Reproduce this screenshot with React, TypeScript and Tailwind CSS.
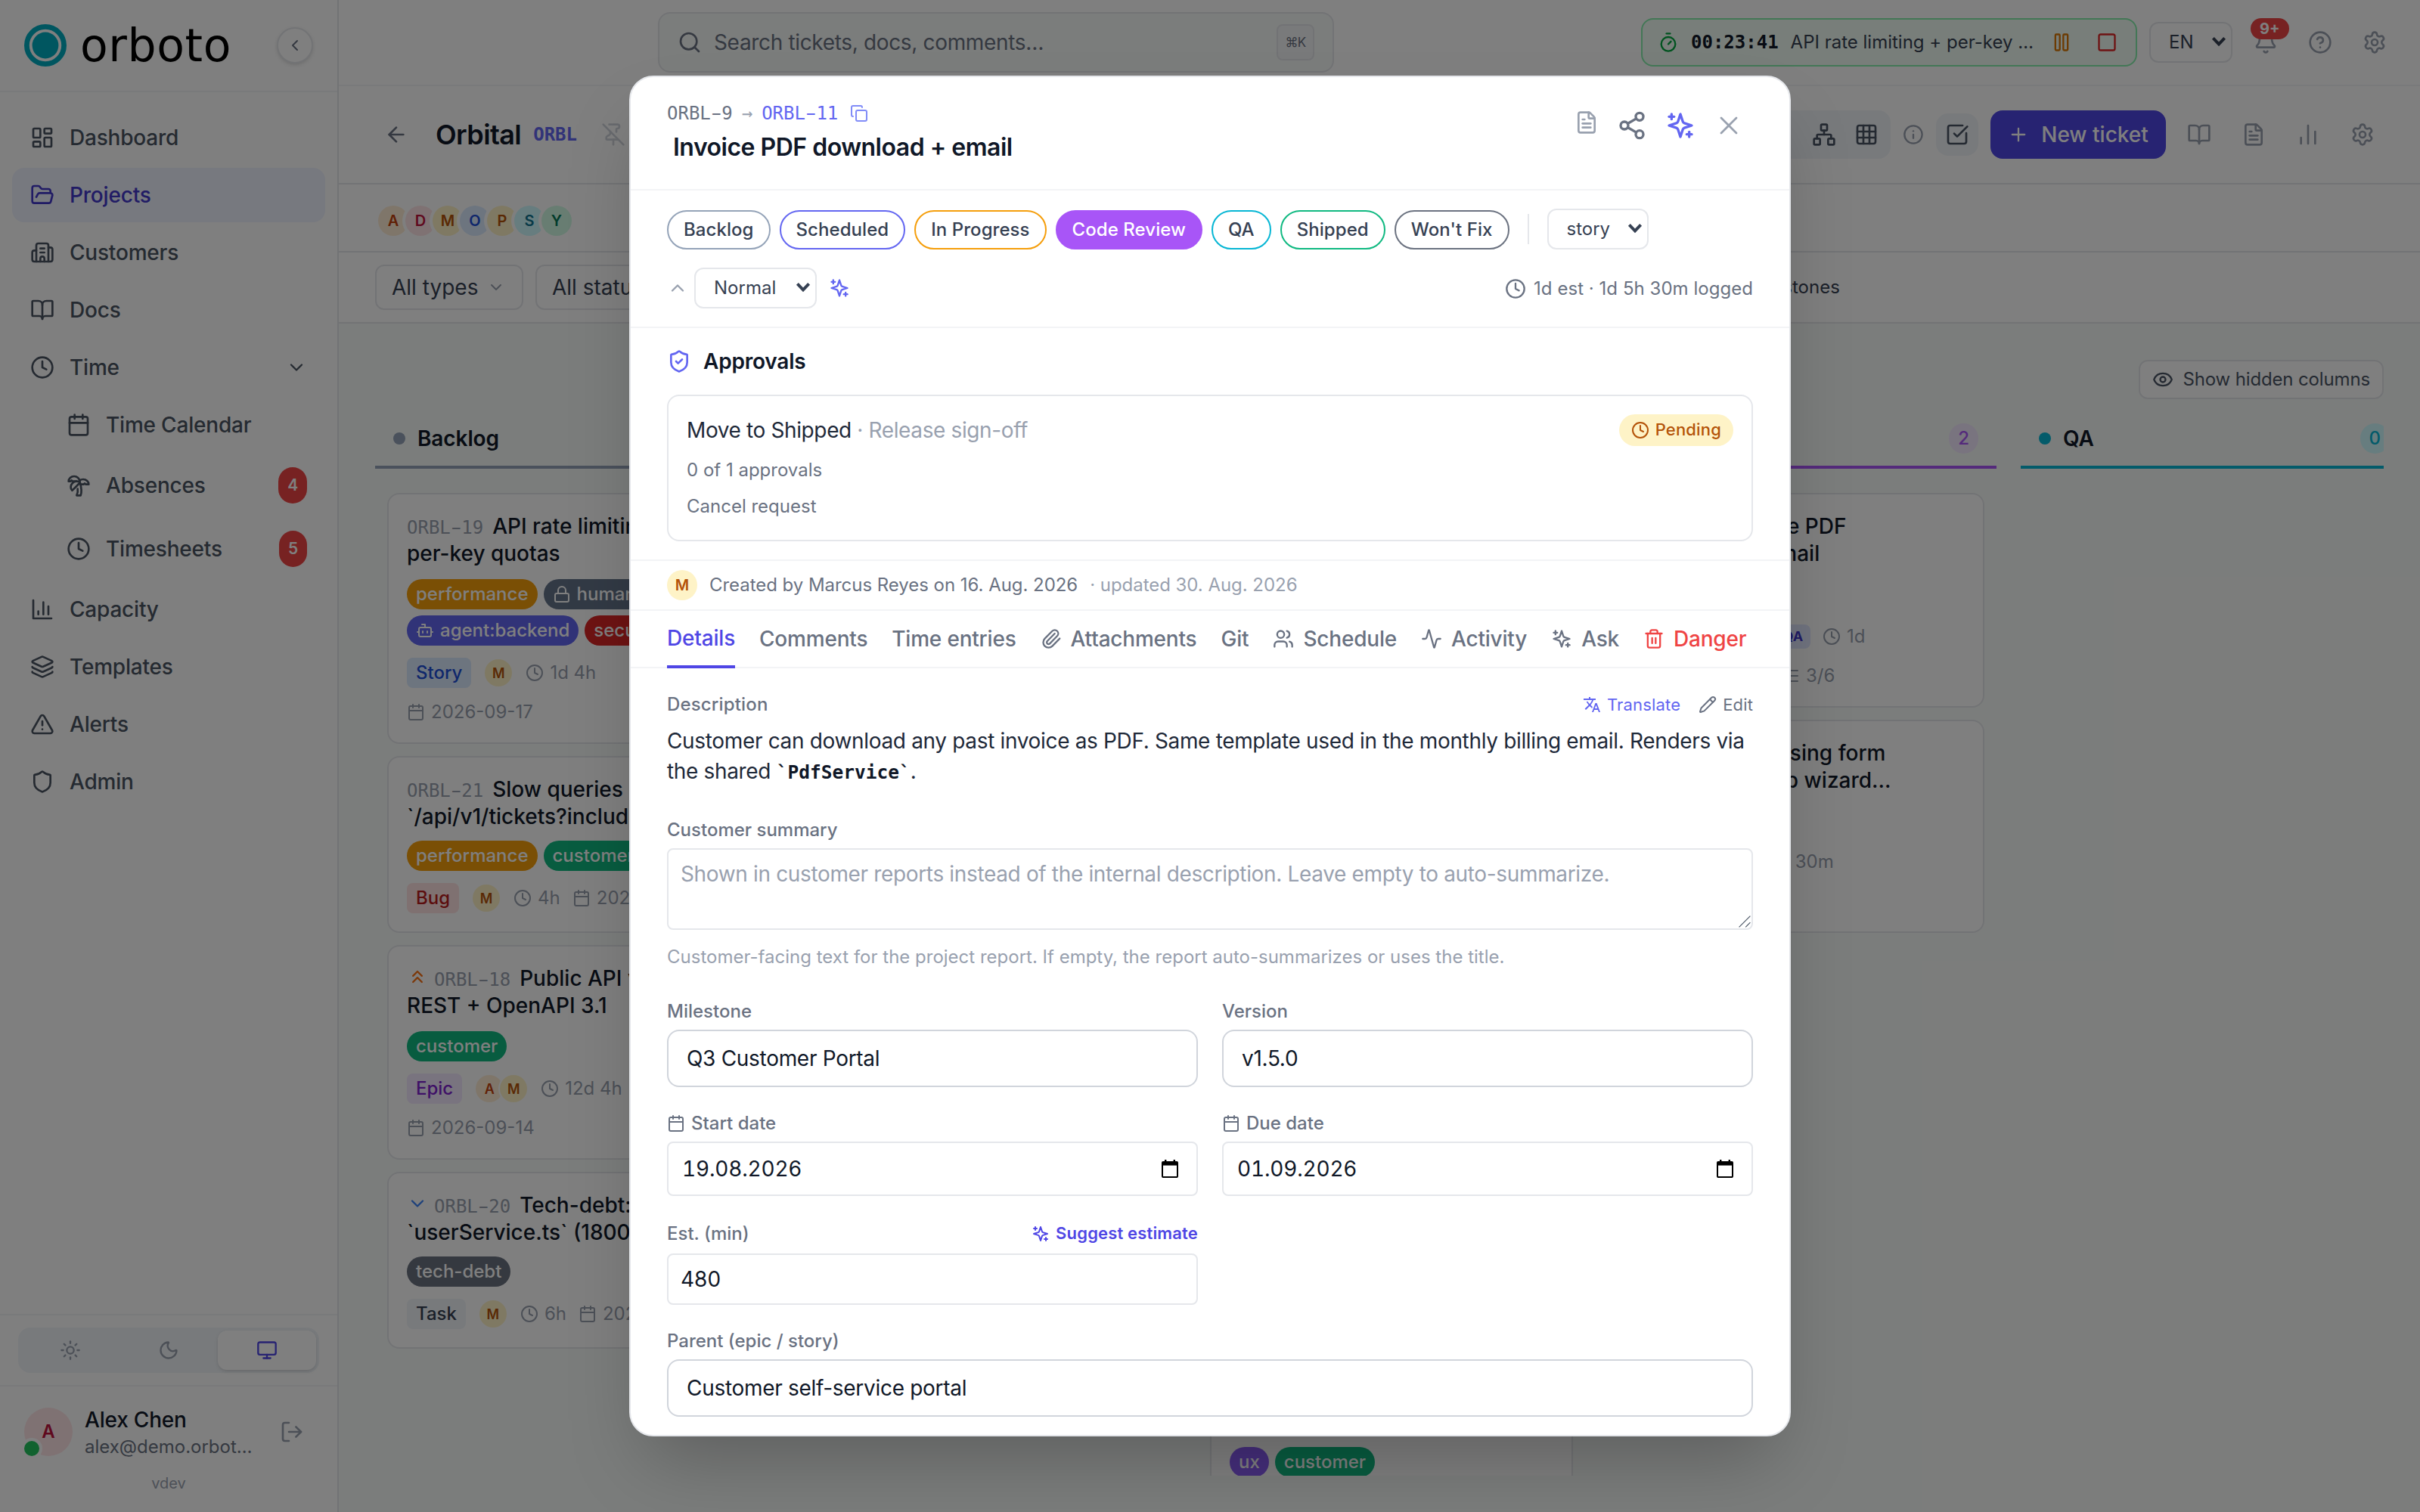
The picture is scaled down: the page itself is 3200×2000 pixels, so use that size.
import React from "react";
import {
  Activity,
  ArrowLeft,
  Bell,
  BookOpen,
  Bot,
  Building2,
  Calendar,
  ChartNoAxesColumn,
  ChevronDown,
  ChevronLeft,
  ChevronsUp,
  ChevronUp,
  CircleHelp,
  Clock,
  Copy,
  Eye,
  FileText,
  FolderOpen,
  Grid3x3,
  Info,
  Layers,
  LayoutDashboard,
  List,
  Lock,
  LogOut,
  Monitor,
  Moon,
  Network,
  Paperclip,
  Pause,
  Pencil,
  PinOff,
  Plus,
  Search,
  Settings,
  Share2,
  Shield,
  ShieldCheck,
  Square,
  SquareCheckBig,
  Sun,
  Timer,
  Trash2,
  TreePalm,
  TriangleAlert,
  Users,
  X,
} from "lucide-react";

const MONO = "font-['DejaVu_Sans_Mono',monospace]";

const Sparkles = ({ size = 14, className = "" }: { size?: number; className?: string }) => (
  <svg
    width={size}
    height={size}
    viewBox="0 0 24 24"
    fill="none"
    stroke="currentColor"
    strokeWidth="2"
    strokeLinecap="round"
    strokeLinejoin="round"
    className={`shrink-0 ${className}`}
  >
    <path d="m12 3-1.912 5.813a2 2 0 0 1-1.275 1.275L3 12l5.813 1.912a2 2 0 0 1 1.275 1.275L12 21l1.912-5.813a2 2 0 0 1 1.275-1.275L21 12l-5.813-1.912a2 2 0 0 1-1.275-1.275L12 3Z" />
    <path d="M5 3v4" />
    <path d="M19 17v4" />
    <path d="M3 5h4" />
    <path d="M17 19h4" />
  </svg>
);

const BarChart = () => (
  <svg
    width={16}
    height={16}
    viewBox="0 0 24 24"
    fill="none"
    stroke="currentColor"
    strokeWidth="2"
    strokeLinecap="round"
    strokeLinejoin="round"
  >
    <path d="M3 3v18h18" />
    <path d="M18 17V9" />
    <path d="M13 17V5" />
    <path d="M8 17v-3" />
  </svg>
);

const TranslateIcon = () => (
  <svg width={12} height={12} viewBox="0 0 24 24" fill="currentColor">
    <path d="M12.87 15.07l-2.54-2.51.03-.03A17.52 17.52 0 0 0 14.07 6H17V4h-7V2H8v2H1v1.99h11.17C11.5 7.92 10.44 9.75 9 11.35 8.07 10.32 7.3 9.19 6.69 8h-2c.73 1.63 1.73 3.17 2.98 4.56l-5.09 5.02L4 19l5-5 3.11 3.11.76-2.04zM18.5 10h-2L12 22h2l1.12-3h4.75L21 22h2l-4.5-12zm-2.62 7l1.62-4.33L19.12 17h-3.24z" />
  </svg>
);

/* Browser style date picker glyph */
const DateGlyph = () => (
  <svg width={11} height={12} viewBox="0 0 11 12" className="mr-[3px] text-black">
    <rect x="0.5" y="1.5" width="10" height="10" rx="0.8" fill="none" stroke="currentColor" />
    <path d="M0.3 1.2h10.4v2.6H0.3z" fill="currentColor" />
    <path d="M2.6 0v1.6M8.4 0v1.6" stroke="currentColor" strokeWidth="1.2" />
  </svg>
);

const Select = ({ className = "", children }: any) => (
  <div
    className={`flex h-[27px] items-center justify-between rounded-md border border-gray-200 bg-white pr-[3px] pl-3 text-xs text-gray-700 ${className}`}
  >
    {children}
    <svg width={10} height={7} viewBox="0 0 10 7" className="mb-px">
      <path d="M1.2 1.2 5 5.2l3.8-4" fill="none" stroke="currentColor" strokeWidth="2" />
    </svg>
  </div>
);

const TicketKey = ({ id }: { id: string }) => {
  const [project, number] = id.split("-");
  return (
    <>
      {project}
      <span className="inline-block scale-x-[1.7]">-</span>
      {number}
    </>
  );
};

const NavItem = ({ icon: Icon, label, active, sub, badge, chevron }: any) => (
  <div
    className={`flex items-center gap-2.5 rounded-lg py-2 pr-3 text-sm font-medium tracking-[-0.1px] ${
      sub ? "pl-9" : "pl-3"
    } ${active ? "bg-[#eef2ff] text-[#4338ca]" : "text-[#4b5563]"}`}
  >
    <Icon size={16} />
    <span className="flex-1">{label}</span>
    {badge && (
      <span className="rounded-full bg-[#ef4444] px-1.5 py-1 text-[10.5px] leading-4 font-semibold text-white">
        {badge}
      </span>
    )}
    {chevron && <ChevronDown size={14} />}
  </div>
);

const Sidebar = () => (
  <aside className="flex h-full w-56 shrink-0 flex-col border-r border-gray-200 bg-white">
    <div className="flex h-[61px] items-center border-b border-gray-100 px-4">
      <svg width={28} height={28} viewBox="0 0 28 28">
        <circle cx="14" cy="14" r="12.3" fill="none" stroke="#00acc1" strokeWidth="3.4" />
        <circle cx="14" cy="14" r="8.7" fill="#00acc1" />
      </svg>
      <span className="ml-[9px] flex-1 font-['DejaVu_Sans',sans-serif] text-[30px] leading-none tracking-[0.3px] text-black">
        orboto
      </span>
      <div className="flex size-6 items-center justify-center rounded-full border border-gray-200 bg-white text-gray-500 shadow-sm">
        <ChevronLeft size={12} />
      </div>
    </div>
    <nav className="flex flex-1 flex-col gap-0.5 px-2 py-3">
      <NavItem icon={LayoutDashboard} label="Dashboard" />
      <NavItem icon={FolderOpen} label="Projects" active />
      <NavItem icon={Building2} label="Customers" />
      <NavItem icon={BookOpen} label="Docs" />
      <NavItem icon={Clock} label="Time" chevron />
      <NavItem icon={Calendar} label="Time Calendar" sub />
      <NavItem icon={TreePalm} label="Absences" sub badge="4" />
      <NavItem icon={Clock} label="Timesheets" sub badge="5" />
      <NavItem icon={BarChart} label="Capacity" />
      <NavItem icon={Layers} label="Templates" />
      <NavItem icon={TriangleAlert} label="Alerts" />
      <NavItem icon={Shield} label="Admin" />
    </nav>
    <div className="border-t border-gray-100 px-3 py-2">
      <div className="flex h-[30px] rounded-lg bg-slate-100 p-0.5 text-gray-400">
        <div className="flex flex-1 items-center justify-center">
          <Sun size={14} />
        </div>
        <div className="flex flex-1 items-center justify-center">
          <Moon size={14} />
        </div>
        <div className="flex flex-1 items-center justify-center rounded-md bg-white text-[#4f46e5] shadow-sm">
          <Monitor size={14} />
        </div>
      </div>
    </div>
    <div className="h-[84px] border-t border-gray-100 px-4 pt-3">
      <div className="flex items-center gap-2">
        <div className="relative flex size-8 shrink-0 items-center justify-center rounded-full bg-rose-100 text-xs font-semibold text-[#be123c]">
          A
          <span className="absolute bottom-0 left-0 size-2.5 rounded-full bg-[#22c55e] ring-2 ring-white" />
        </div>
        <div className="w-[112px]">
          <p className="text-sm font-medium tracking-[-0.1px] text-gray-900">Alex Chen</p>
          <p className="text-xs whitespace-nowrap text-gray-500">alex@demo.orbot…</p>
        </div>
        <LogOut size={16} className="ml-[9px] text-gray-400" />
      </div>
      <p className="mt-2 text-center text-[10px] leading-4 text-gray-400">vdev</p>
    </div>
  </aside>
);

const TopBar = () => (
  <header className="flex h-[57px] shrink-0 items-center gap-2 border-b border-gray-100 bg-white px-4">
    <div className="flex flex-1 justify-center">
      <div className="flex h-10 w-[447px] items-center gap-2 rounded-lg border border-gray-200 bg-[#f7faf8] px-3 text-sm tracking-[-0.17px] text-gray-500">
        <Search size={16} />
        <span className="flex-1">Search tickets, docs, comments…</span>
        <kbd className="flex h-6 w-[25px] items-center justify-center rounded border border-gray-200 bg-gray-100 font-['Inter'] text-[8.5px] tracking-[-0.4px] text-gray-500">
          ⌘K
        </kbd>
      </div>
    </div>
    <div className="flex h-8 w-[328px] items-center rounded-lg border border-[#86efac] bg-green-50 px-2.5">
      <Timer size={14} className="text-green-600" />
      <span className={`ml-2 text-xs font-bold text-gray-900 ${MONO}`}>00:23:41</span>
      <span className="ml-2 w-[160px] text-xs whitespace-nowrap text-gray-700">
        API rate limiting + per-key …
      </span>
      <Pause size={14} className="ml-3 text-[#d97706]" />
      <Square size={14} className="ml-4 text-[#dc2626]" />
    </div>
    <Select className="w-[55px]">EN</Select>
    <div className="relative p-1.5 text-gray-400">
      <Bell size={16} />
      <span className="absolute -top-0.5 left-1 rounded-full bg-[#ef4444] px-1.5 text-[10px] leading-[14px] font-bold text-white">
        9+
      </span>
    </div>
    <div className="p-1.5 text-gray-400">
      <CircleHelp size={16} />
    </div>
    <div className="p-1.5 text-gray-400">
      <Settings size={16} />
    </div>
  </header>
);

const people = [
  ["A", "bg-[#ffedd5] text-[#c2410c]"],
  ["D", "bg-[#ffe4e6] text-[#be123c]"],
  ["M", "bg-[#fef3c7] text-[#b45309]"],
  ["O", "bg-[#dbeafe] text-[#1d4ed8]"],
  ["P", "bg-[#fef3c7] text-[#b45309]"],
  ["S", "bg-[#cffafe] text-[#0e7490]"],
  ["Y", "bg-[#d1fae5] text-[#047857]"],
];

const ProjectHeader = () => (
  <div className="shrink-0 bg-white">
    <div className="flex h-[65px] items-center gap-2 border-b border-gray-200 px-6">
      <div className="p-1.5 text-gray-500">
        <ArrowLeft size={16} />
      </div>
      <h1 className="ml-1 text-lg font-semibold tracking-[-0.3px] text-gray-900">Orbital</h1>
      <span className={`text-xs font-bold text-[#6366f1] ${MONO}`}>ORBL</span>
      <PinOff size={16} className="ml-2 text-gray-300" />
      <div className="flex-1" />
      <div className="flex h-8 w-[200px] items-center justify-end gap-3 rounded-lg bg-slate-100 pr-2 text-gray-600">
        <Network size={16} />
        <Grid3x3 size={16} />
      </div>
      <Info size={14} className="text-gray-400" />
      <div className="rounded-lg bg-slate-100 p-1.5 text-gray-600">
        <SquareCheckBig size={16} />
      </div>
      <div className="flex h-8 w-[116px] items-center justify-center gap-2 rounded-lg bg-[#4f46e5] text-sm font-medium text-white">
        <Plus size={14} />
        New ticket
      </div>
      <div className="p-1.5 text-gray-400">
        <BookOpen size={16} />
      </div>
      <div className="p-1.5 text-gray-400">
        <FileText size={16} />
      </div>
      <div className="p-1.5 text-gray-400">
        <ChartNoAxesColumn size={16} />
      </div>
      <div className="p-1.5 text-gray-400">
        <Settings size={16} />
      </div>
    </div>
    <div className="flex h-[45px] -space-x-1.5 border-b border-gray-200 px-6 pt-3">
      {people.map(([letter, tone]) => (
        <div
          key={letter}
          className="flex size-6 items-center justify-center rounded-full bg-white text-[10px] font-semibold"
        >
          <span className={`flex size-5 items-center justify-center rounded-full ${tone}`}>
            {letter}
          </span>
        </div>
      ))}
    </div>
    <div className="flex h-[47px] items-center gap-2 border-b border-gray-200 px-6 text-sm whitespace-nowrap text-gray-700">
      <div className="flex h-[30px] w-[98px] items-center justify-between rounded-md border border-gray-200 pr-[11px] pl-2.5">
        All types
        <ChevronDown size={12} className="text-gray-400" />
      </div>
      <div className="flex h-[30px] w-[116px] items-center justify-between rounded-md border border-gray-200 px-2.5">
        All statuses
        <ChevronDown size={12} className="text-gray-400" />
      </div>
      <span className="ml-[677px] text-xs">Milestones</span>
    </div>
  </div>
);

const Tag = ({ color, icon: Icon, children }: any) => (
  <span
    className={`flex h-5 items-center gap-1 rounded-full px-1.5 text-xs font-medium whitespace-nowrap text-white ${color}`}
  >
    {Icon && <Icon size={12} />}
    {children}
  </span>
);

const Kind = ({ tone, children }: any) => (
  <span className={`rounded px-1.5 text-xs leading-5 font-medium ${tone}`}>{children}</span>
);

const MiniAvatar = ({ letter, tone }: any) => (
  <span className="flex size-5 items-center justify-center rounded-full bg-white text-[9px] font-semibold">
    <span className={`flex size-[18px] items-center justify-center rounded-full ${tone}`}>
      {letter}
    </span>
  </span>
);

const Meta = ({ icon: Icon, children }: any) => (
  <span className="flex items-center gap-1 text-xs whitespace-nowrap text-gray-400">
    <Icon size={12} />
    {children}
  </span>
);

const Card = ({ id, icon, title, tags, meta, footer, tall }: any) => (
  <div className="rounded-lg border border-gray-200 bg-white p-3">
    <div
      className={`text-sm font-medium whitespace-nowrap text-gray-900 ${
        tall ? "h-9 leading-[18px]" : "h-[35px] leading-[18px]"
      }`}
    >
      {icon && <span className="mr-1 inline-block align-[-1px]">{icon}</span>}
      <span className={`mr-1.5 text-xs font-normal text-gray-400 ${MONO}`}>
        <TicketKey id={id} />
      </span>
      {title[0]}
      <br />
      {title[1]}
    </div>
    <div className="mt-2 flex min-h-5 flex-col gap-1">
      {tags.map((row: any, i: number) => (
        <div key={i} className="flex gap-1">
          {row}
        </div>
      ))}
    </div>
    <div className="mt-2 flex h-5 items-center gap-2">{meta}</div>
    {footer && <div className="mt-2 flex h-4 items-center">{footer}</div>}
  </div>
);

const marcus = <MiniAvatar letter="M" tone="bg-[#fef3c7] text-[#b45309]" />;

const Column = ({ name, dot, line, count, countTone, children }: any) => (
  <section className="w-64 shrink-0">
    <div className={`flex h-[38px] items-center border-b-2 px-3 ${line}`}>
      <span className={`mr-2 size-2 rounded-full ${dot}`} />
      <h2 className="flex-1 text-sm font-semibold tracking-[-0.05px] text-gray-900">{name}</h2>
      <span className={`rounded-full px-1.5 text-xs leading-5 font-medium ${countTone}`}>{count}</span>
    </div>
    <div className="flex flex-col gap-2 px-2 pt-4">{children}</div>
  </section>
);

const Board = () => (
  <div className="flex-1 overflow-hidden bg-[#f7faf8] p-6">
    <div className="h-full overflow-hidden">
      <div className="flex justify-end">
        <div className="flex h-[26px] items-center gap-1.5 rounded-md border border-gray-200 bg-white px-2 text-xs tracking-[-0.07px] text-gray-600">
          <Eye size={14} />
          Show hidden columns
        </div>
      </div>
      <div className="mt-2 flex gap-4">
        <Column
          name="Backlog"
          dot="bg-[#94a3b8]"
          line="border-[#94a3b8]"
          count="4"
          countTone="bg-slate-100 text-slate-500"
        >
          <Card
            tall
            id="ORBL-19"
            title={["API rate limiting +", "per-key quotas"]}
            tags={[
              <>
                <Tag color="bg-[#f59e0b]">performance</Tag>
                <Tag color="bg-[#64748b]" icon={Lock}>
                  human-only
                </Tag>
              </>,
              <>
                <Tag color="bg-[#6366f1]" icon={Bot}>
                  agent:backend
                </Tag>
                <Tag color="bg-[#dc2626]">security</Tag>
              </>,
            ]}
            meta={
              <>
                <Kind tone="bg-[#dbeafe] text-[#1d4ed8]">Story</Kind>
                {marcus}
                <Meta icon={Clock}>1d 4h</Meta>
              </>
            }
            footer={<Meta icon={Calendar}>2026-09-17</Meta>}
          />
          <Card
            id="ORBL-21"
            title={["Slow queries on", "`/api/v1/tickets?include`"]}
            tags={[
              <>
                <Tag color="bg-[#f59e0b]">performance</Tag>
                <Tag color="bg-[#10b981]">customer</Tag>
              </>,
            ]}
            meta={
              <>
                <Kind tone="bg-[#fee2e2] text-[#b91c1c]">Bug</Kind>
                {marcus}
                <Meta icon={Clock}>4h</Meta>
                <Meta icon={Calendar}>2026-09-03</Meta>
              </>
            }
          />
          <Card
            tall
            id="ORBL-18"
            icon={<ChevronsUp size={14} className="text-[#f97316]" />}
            title={["Public API v1 —", "REST + OpenAPI 3.1"]}
            tags={[<Tag color="bg-[#10b981]">customer</Tag>]}
            meta={
              <>
                <Kind tone="bg-[#f3e8ff] text-[#7e22ce]">Epic</Kind>
                <span className="flex -space-x-1">
                  <MiniAvatar letter="A" tone="bg-[#ffedd5] text-[#c2410c]" />
                  {marcus}
                </span>
                <Meta icon={Clock}>12d 4h</Meta>
              </>
            }
            footer={<Meta icon={Calendar}>2026-09-14</Meta>}
          />
          <Card
            id="ORBL-20"
            icon={<ChevronDown size={14} className="text-[#3b82f6]" />}
            title={["Tech-debt: split", "`userService.ts` (1800 LOC)"]}
            tags={[<Tag color="bg-[#6b7280]">tech-debt</Tag>]}
            meta={
              <>
                <Kind tone="bg-slate-100 text-gray-700">Task</Kind>
                {marcus}
                <Meta icon={Clock}>6h</Meta>
                <Meta icon={Calendar}>2026-09-21</Meta>
              </>
            }
          />
        </Column>
        <Column
          name="Scheduled"
          dot="bg-[#6366f1]"
          line="border-[#6366f1]"
          count="0"
          countTone="bg-indigo-100 text-[#6366f1]"
        />
        <Column
          name="In Progress"
          dot="bg-[#f59e0b]"
          line="border-[#f59e0b]"
          count="5"
          countTone="bg-amber-100 text-[#f59e0b]"
        >
          <div className="h-[566px] shrink-0" />
          <Card
            tall
            id="ORBL-10"
            title={["Customer portal", "onboarding"]}
            tags={[
              <>
                <Tag color="bg-[#8b5cf6]">ux</Tag>
                <Tag color="bg-[#10b981]">customer</Tag>
              </>,
            ]}
            meta={marcus}
          />
        </Column>
        <Column
          name="Code Review"
          dot="bg-[#a855f7]"
          line="border-[#a855f7]"
          count="2"
          countTone="bg-[#f3e8ff] text-[#a855f7]"
        >
          <Card
            tall
            id="ORBL-11"
            title={["Invoice PDF", "download + email"]}
            tags={[]}
            meta={
              <>
                <Kind tone="bg-[#dbeafe] text-[#1d4ed8]">Story</Kind>
                {marcus}
                <span className="ml-[10px] h-4 rounded bg-[#e0e7ff] px-[5px] text-[9px] leading-4 font-bold text-[#4338ca]">
                  QA
                </span>
                <Meta icon={Clock}>1d</Meta>
              </>
            }
            footer={
              <div className="ml-[93px]">
                <Meta icon={List}>3/6</Meta>
              </div>
            }
          />
          <Card
            id="ORBL-12"
            icon={<ChevronDown size={14} className="text-[#3b82f6]" />}
            title={["Missing form", "labels in signup wizard…"]}
            tags={[]}
            meta={
              <>
                <Kind tone="bg-[#fee2e2] text-[#b91c1c]">Bug</Kind>
                {marcus}
                <Meta icon={Clock}>1h 30m</Meta>
              </>
            }
            footer={<span />}
          />
        </Column>
        <Column
          name="QA"
          dot="bg-[#06b6d4]"
          line="border-[#06b6d4]"
          count="0"
          countTone="bg-[#cffafe] text-[#06b6d4]"
        />
      </div>
    </div>
  </div>
);

const statuses = [
  ["Backlog", "border-[#94a3b8] text-gray-700"],
  ["Scheduled", "border-[#6366f1] text-gray-700"],
  ["In Progress", "border-[#f59e0b] text-gray-700"],
  ["Code Review", "border-[#a855f7] bg-[#a855f7] text-white"],
  ["QA", "border-[#06b6d4] text-gray-700"],
  ["Shipped", "border-[#10b981] text-gray-700"],
  ["Won't Fix", "border-[#6b7280] text-gray-700"],
];

const tabs: any[] = [
  ["Comments"],
  ["Time entries"],
  ["Attachments", Paperclip],
  ["Git"],
  ["Schedule", Users],
  ["Activity", Activity],
  ["Ask", Sparkles],
];

const Label = ({ icon: Icon, children }: any) => (
  <div className="mb-1 flex items-center gap-1 text-xs font-medium text-gray-500">
    {Icon && <Icon size={12} />}
    {children}
  </div>
);

const Picker = ({ children }: any) => (
  <div className="flex h-[38px] items-center rounded-lg border border-gray-300 px-3 text-sm tracking-[-0.15px] text-gray-900">
    {children}
  </div>
);

const DateField = ({ label, value }: any) => (
  <div>
    <Label icon={Calendar}>{label}</Label>
    <div className="flex h-9 items-center justify-between rounded border border-gray-200 px-[9px] text-sm tracking-[-0.1px] text-gray-900 tabular-nums">
      {value}
      <DateGlyph />
    </div>
  </div>
);

const TicketDialog = () => (
  <div className="h-[900px] w-[768px] overflow-hidden rounded-2xl border border-gray-200 bg-white shadow-2xl">
    {/* Title */}
    <div className="flex h-[75px] items-start border-b border-gray-100 px-6 pt-4">
      <div className="flex-1">
        <div className={`flex h-4 items-center text-xs text-gray-500 ${MONO}`}>
          <span>
            <TicketKey id="ORBL-9" />
          </span>
          <span className="mx-1.5 text-gray-400">→</span>
          <span className="text-[#6366f1]">
            <TicketKey id="ORBL-11" />
          </span>
          <Copy size={12} className="ml-2 text-[#818cf8]" />
        </div>
        <h3 className="mt-[2.5px] ml-1 text-base font-semibold tracking-[-0.25px] text-gray-900">
          Invoice PDF download + email
        </h3>
      </div>
      <div className="p-1.5 text-gray-400">
        <FileText size={16} />
      </div>
      <div className="p-1.5 text-gray-500">
        <Share2 size={20} />
      </div>
      <div className="p-1.5 text-[#6366f1]">
        <Sparkles size={20} />
      </div>
      <div className="p-1.5 text-gray-400">
        <X size={20} strokeWidth={1.6} />
      </div>
    </div>

    {/* Status and priority */}
    <div className="border-b border-gray-100 px-6 py-3">
      <div className="flex h-[27px] items-end gap-1.5">
        {statuses.map(([name, tone]) => (
          <span
            key={name}
            className={`rounded-full border px-2.5 py-1 text-xs font-medium tracking-[0.03px] whitespace-nowrap ${tone}`}
          >
            {name}
          </span>
        ))}
        <span className="mx-1.5 h-5 w-px self-center bg-gray-200" />
        <Select className="w-[67px]">story</Select>
      </div>
      <div className="mt-3 flex h-[27px] items-center">
        <ChevronUp size={14} className="mr-1 text-gray-400" />
        <Select className="w-[81px]">Normal</Select>
        <Sparkles size={14} className="ml-2 text-[#6366f1]" />
        <div className="mt-px ml-auto flex items-center gap-[5px] text-xs tracking-[0.02px] text-gray-500">
          <Clock size={14} />
          1d est · 1d 5h 30m logged
        </div>
      </div>
    </div>

    {/* Approvals */}
    <div className="border-b border-gray-100 px-6 py-3">
      <div className="flex items-center gap-2 text-sm font-semibold tracking-[-0.1px] text-gray-900">
        <ShieldCheck size={16} className="text-[#6366f1]" />
        Approvals
      </div>
      <div className="mt-3 h-[97px] rounded-lg border border-gray-200 p-3">
        <div className="flex h-[21px] items-center justify-between text-sm text-gray-800">
          <span className="tracking-[-0.19px]">
            Move to Shipped <span className="text-gray-400">· Release sign-off</span>
          </span>
          <span className="flex h-[21px] items-center gap-1 rounded-full bg-[#fef3c7] px-2 text-[11px] font-medium tracking-[0.08px] text-[#b45309]">
            <Clock size={12} />
            Pending
          </span>
        </div>
        <p className="mt-2 text-xs text-gray-500">0 of 1 approvals</p>
        <p className="mt-2 text-xs text-gray-500">Cancel request</p>
      </div>
    </div>

    <div className="flex items-center border-b border-gray-100 px-6 py-1.5 text-xs tracking-[-0.02px] text-gray-500">
      <span className="mr-2 flex size-5 items-center justify-center rounded-full bg-[#fef3c7] text-[10px] font-semibold text-[#b45309]">
        M
      </span>
      Created by Marcus Reyes on 16. Aug. 2026
      <span className="ml-2 text-gray-400">· updated 30. Aug. 2026</span>
    </div>

    {/* Tabs */}
    <div className="flex h-[38px] gap-4 border-b border-gray-100 px-6 text-sm font-medium tracking-[-0.1px] text-gray-500">
      <span className="h-[38px] border-b-2 border-[#4f46e5] pt-2 text-[#4f46e5]">Details</span>
      {tabs.map(([name, Icon]) => (
        <span key={name} className="flex items-center gap-1.5 whitespace-nowrap">
          {Icon && <Icon size={14} />}
          {name}
        </span>
      ))}
      <span className="flex items-center gap-1.5 text-[#ef4444]">
        <Trash2 size={14} />
        Danger
      </span>
    </div>

    {/* Details form */}
    <div className="px-6 pt-4">
      <div className="flex h-4 items-center text-[11px] tracking-[0.08px] text-gray-500">
        <span className="flex-1 text-xs font-medium">Description</span>
        <span className="flex items-center gap-1 text-[#6366f1]">
          <TranslateIcon />
          Translate
        </span>
        <span className="ml-3 flex items-center gap-1">
          <Pencil size={12} />
          Edit
        </span>
      </div>
      <p className="mt-1.5 text-sm tracking-[-0.17px] text-gray-800">
        Customer can download any past invoice as PDF. Same template used in the monthly billing
        email. Renders via the shared{" "}
        <code className={`text-[12.25px] font-bold tracking-normal text-gray-900 ${MONO}`}>
          `PdfService`
        </code>
        .
      </p>

      <div className="mt-[21px]">
        <Label>Customer summary</Label>
        <div className="relative">
          <textarea
            className="block h-[54px] w-full resize-none rounded border border-gray-200 px-2 py-1.5 text-sm tracking-[-0.175px] placeholder:text-gray-400"
            placeholder="Shown in customer reports instead of the internal description. Leave empty to auto-summarize."
          />
          <svg
            width={8}
            height={8}
            viewBox="0 0 8 8"
            className="absolute right-[1.5px] bottom-[1.5px] text-gray-600"
          >
            <path d="M.3 7.7 7.7.3M4.6 7.7l3.1-3.1" stroke="currentColor" strokeWidth="0.6" />
          </svg>
        </div>
        <p className="mt-2.5 text-xs text-gray-400">
          Customer-facing text for the project report. If empty, the report auto-summarizes or uses
          the title.
        </p>
      </div>

      <div className="mt-5 grid grid-cols-2 gap-4">
        <div>
          <Label>Milestone</Label>
          <Picker>Q3 Customer Portal</Picker>
        </div>
        <div>
          <Label>Version</Label>
          <Picker>v1.5.0</Picker>
        </div>
        <DateField label="Start date" value="19.08.2026" />
        <DateField label="Due date" value="01.09.2026" />
        <div>
          <div className="mb-1 flex h-[18px] items-center justify-between text-xs font-medium text-gray-500">
            Est. (min)
            <span className="flex items-center gap-1 text-[11px] font-semibold tracking-[0.08px] text-[#4f46e5]">
              <Sparkles size={12} />
              Suggest estimate
            </span>
          </div>
          <div className="flex h-[34px] items-center rounded border border-gray-200 px-2 text-sm text-gray-900">
            480
          </div>
        </div>
      </div>
      <div className="mt-4">
        <Label>Parent (epic / story)</Label>
        <Picker>Customer self-service portal</Picker>
      </div>
    </div>
  </div>
);

const App = () => (
  <div className="relative h-[1000px] w-[1600px] overflow-hidden bg-white font-['Inter',sans-serif] [zoom:2]">
    <div className="flex h-full">
      <Sidebar />
      <main className="flex min-w-0 flex-1 flex-col">
        <TopBar />
        <ProjectHeader />
        <Board />
      </main>
    </div>
    <div className="absolute inset-0 flex items-center justify-center bg-black/50">
      <TicketDialog />
    </div>
  </div>
);

export default App;
